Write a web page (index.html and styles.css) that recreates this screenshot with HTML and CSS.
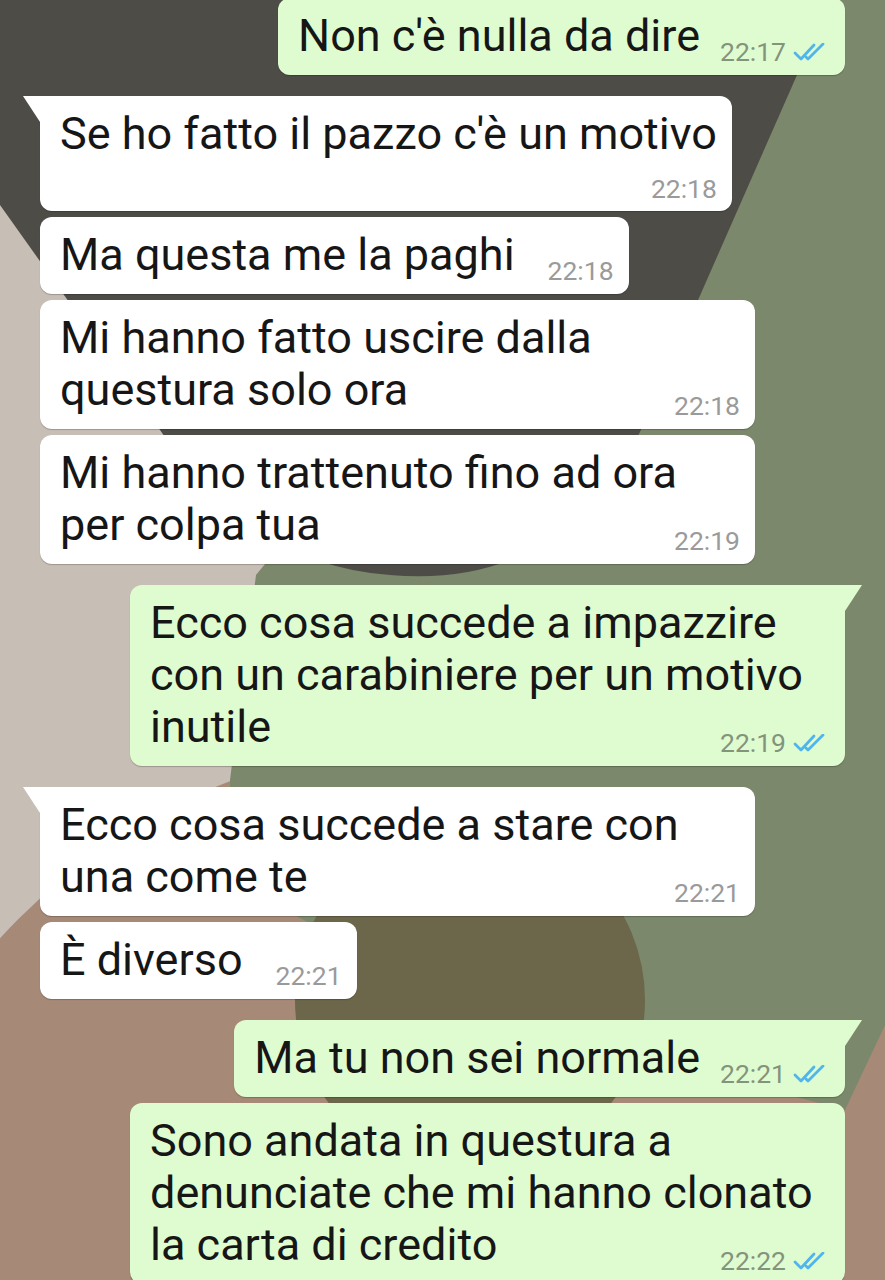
FILE: index.html
```html
<!DOCTYPE html>
<html lang="it">
<head>
    <meta charset="UTF-8">
    <meta name="viewport" content="width=device-width, initial-scale=1.0">
    <title>Chat</title>
    <link rel="stylesheet" href="styles.css">
</head>
<body>
    <div class="screen">
        <!-- wallpaper shapes -->
        <svg class="wallpaper" width="885" height="1280" viewBox="0 0 885 1280">
            <rect width="885" height="1280" fill="#c7beb5"/>
            <circle cx="450" cy="1350" r="610" fill="#a78978"/>
            <polygon points="600,0 885,0 885,1025 845,1110 470,1010 230,880 230,780 256,575 400,400" fill="#7b886b"/>
            <circle cx="470" cy="1000" r="175" fill="#6c664a"/>
            <path d="M0,0 L830,0 L640,432 Q560,590 390,575 Q250,565 160,430 L0,205 Z" fill="#4e4c47"/>
        </svg>

        <div class="chat">
            <div class="msg out top">
                <div class="text">Non c'è nulla da dire<span class="meta">22:17<svg class="ticks" viewBox="0 0 34 18"><path d="M2 10 L8 16 L21 2"/><path d="M13 14 L15 16 L30 1"/></svg></span></div>
            </div>

            <div class="msg in first stack">
                <div class="text">Se ho fatto il pazzo c'è un motivo<span class="meta">22:18</span></div>
            </div>
            <div class="msg in">
                <div class="text">Ma questa me la paghi<span class="meta">22:18</span></div>
            </div>
            <div class="msg in">
                <div class="text">Mi hanno fatto uscire dalla questura solo ora<span class="meta">22:18</span></div>
            </div>
            <div class="msg in">
                <div class="text">Mi hanno trattenuto fino ad ora per colpa tua<span class="meta">22:19</span></div>
            </div>

            <div class="msg out first">
                <div class="text">Ecco cosa succede a impazzire con un carabiniere per un motivo inutile<span class="meta">22:19<svg class="ticks" viewBox="0 0 34 18"><path d="M2 10 L8 16 L21 2"/><path d="M13 14 L15 16 L30 1"/></svg></span></div>
            </div>

            <div class="msg in first">
                <div class="text">Ecco cosa succede a stare con una come te<span class="meta">22:21</span></div>
            </div>
            <div class="msg in">
                <div class="text">È diverso<span class="meta">22:21</span></div>
            </div>

            <div class="msg out first">
                <div class="text">Ma tu non sei normale<span class="meta">22:21<svg class="ticks" viewBox="0 0 34 18"><path d="M2 10 L8 16 L21 2"/><path d="M13 14 L15 16 L30 1"/></svg></span></div>
            </div>
            <div class="msg out">
                <div class="text">Sono andata in questura a denunciate che mi hanno clonato la carta di credito<span class="meta">22:22<svg class="ticks" viewBox="0 0 34 18"><path d="M2 10 L8 16 L21 2"/><path d="M13 14 L15 16 L30 1"/></svg></span></div>
            </div>
        </div>
    </div>
</body>
</html>
```
FILE: styles.css
```css
body {
    margin: 0;
    font-family: Roboto, "Noto Sans", sans-serif;
    background: #c7beb5;
}
.screen {
    position: relative;
    width: 885px;
    height: 1280px;
    overflow: hidden;
}
.wallpaper {
    position: absolute;
    top: 0;
    left: 0;
}
.chat {
    position: relative;
    display: flex;
    flex-direction: column;
    padding: 0 40px;
}
.msg {
    position: relative;
    display: flow-root;
    box-sizing: border-box;
    max-width: 715px;
    margin-top: 6px;
    padding: 12px 15px 13px 20px;
    border-radius: 12px;
    box-shadow: 0 1px 1px rgba(0,0,0,0.22);
    color: #161616;
    font-size: 45px;
    line-height: 52px;
}
.msg.in {
    align-self: flex-start;
    background: #ffffff;
}
.msg.out {
    align-self: flex-end;
    background: #dffcd0;
    padding-right: 18px;
}
.msg.first {
    margin-top: 21px;
}
.msg.top {
    margin-top: -2px;
}
.msg.in.first {
    border-top-left-radius: 0;
}
.msg.out.first {
    border-top-right-radius: 0;
}
.msg.first::before {
    content: "";
    position: absolute;
    top: 0;
    width: 17px;
    height: 26px;
    background: inherit;
}
.msg.in.first::before {
    left: -17px;
    clip-path: polygon(0 0, 100% 0, 100% 100%);
}
.msg.out.first::before {
    right: -17px;
    clip-path: polygon(0 0, 100% 0, 0 100%);
}
.meta {
    float: right;
    position: relative;
    top: 16px;
    height: 52px;
    line-height: 52px;
    margin-left: 33px;
    font-size: 26.5px;
    color: #9a9a9a;
}
.msg.out .meta {
    margin-left: 20px;
    color: #84937c;
}
.msg.stack .meta {
    float: none;
    display: block;
    text-align: right;
    height: 38px;
    line-height: 38px;
    top: 10px;
    margin-left: 0;
}
.ticks {
    width: 34px;
    height: 18px;
    margin-left: 7px;
    vertical-align: 0;
    fill: none;
    stroke: #4fb5ec;
    stroke-width: 2.8;
    stroke-linecap: round;
    stroke-linejoin: round;
}
```
